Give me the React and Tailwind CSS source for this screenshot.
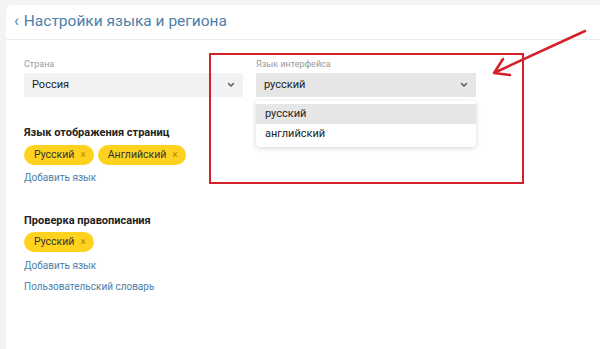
import React from 'react';

const font = { fontFamily: 'Roboto, "Noto Sans", sans-serif' };

const Chevron = () => (
  <svg width="8" height="6" viewBox="0 0 8 6" className="text-[#555]">
    <path d="M1.5 1.5L4 4l2.5-2.5" stroke="currentColor" strokeWidth="1.4" fill="none" strokeLinecap="round" />
  </svg>
);

const Chip = ({ label }) => (
  <span className="inline-flex items-center h-[20px] pl-[10px] pr-[8px] rounded-full bg-[#ffd21f] text-[10.5px] text-[#333] gap-[6px]">
    {label}
    <span className="text-[10px] text-[#b08a00] leading-none">×</span>
  </span>
);

const Select = ({ label, value, dark }) => (
  <div className="flex flex-col">
    <span className="text-[9px] text-[#9a9a9a] h-[12px] leading-[12px] mb-[3px]">{label}</span>
    <div className={`h-[24px] flex items-center justify-between pl-[8px] pr-[8px] text-[11px] text-[#222] ${dark ? 'bg-[#e6e6e6]' : 'bg-[#f2f2f2]'}`}>
      <span>{value}</span>
      <Chevron />
    </div>
  </div>
);

const App = () => {
  return (
    <div className="w-[600px] h-[349px] bg-[#f4f4f4] pl-[6px] pt-[5px] overflow-hidden relative" style={font}>
      <div className="bg-white rounded-tl-[6px] h-full">
        <div className="h-[35px] border-b border-[#ececec] flex items-center pl-[8px] gap-[5px]">
          <span className="text-[16px] text-[#4e7ea9] leading-none -mt-[2px]">‹</span>
          <span className="text-[15.5px] text-[#4e7ea9]">Настройки языка и региона</span>
        </div>
        <div className="px-[18px] pt-[18px]">
          <div className="grid grid-cols-[219px_220px] gap-[13px]">
            <Select label="Страна" value="Россия" />
            <div className="relative">
              <Select label="Язык интерфейса" value="русский" dark />
              <div className="absolute left-0 right-0 top-[43px] bg-white rounded-[4px] shadow-[0_1px_5px_rgba(0,0,0,0.18)] py-[3px] text-[11px] text-[#222] z-10">
                <div className="h-[20px] flex items-center pl-[9px] bg-[#e6e6e6]">русский</div>
                <div className="h-[20px] flex items-center pl-[9px]">английский</div>
              </div>
            </div>
          </div>

          <div className="mt-[28px] text-[11px] font-bold text-[#222]">Язык отображения страниц</div>
          <div className="flex gap-[4px] mt-[3px]">
            <Chip label="Русский" />
            <Chip label="Английский" />
          </div>
          <div className="mt-[5px] text-[10px] text-[#4e7ea9]">Добавить язык</div>

          <div className="mt-[28px] text-[11px] font-bold text-[#222]">Проверка правописания</div>
          <div className="flex gap-[4px] mt-[3px]">
            <Chip label="Русский" />
          </div>
          <div className="mt-[6px] text-[10px] text-[#4e7ea9]">Добавить язык</div>
          <div className="mt-[6px] text-[10px] text-[#4e7ea9]">Пользовательский словарь</div>
        </div>
      </div>

      <div className="absolute left-[209px] top-[53px] w-[315px] h-[131px] border-2 border-[#d3202a] pointer-events-none" />
      <svg className="absolute left-0 top-0 pointer-events-none" width="600" height="349">
        <line x1="585" y1="31" x2="496" y2="72" stroke="#d3202a" strokeWidth="2.5" strokeLinecap="round" />
        <path d="M503 59 L494 73 L510 75" stroke="#d3202a" strokeWidth="2.5" fill="none" strokeLinecap="round" strokeLinejoin="round" />
      </svg>
    </div>
  );
};

export default App;
